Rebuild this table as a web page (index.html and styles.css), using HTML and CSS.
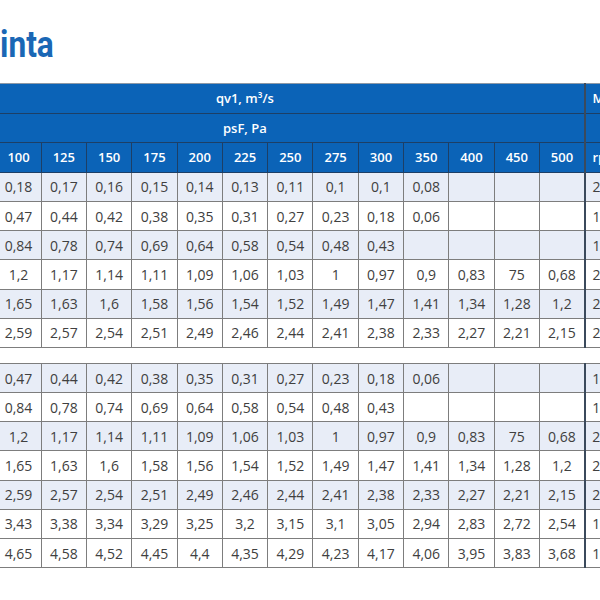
FILE: index.html
```html
<!DOCTYPE html>
<html lang="es">
<head>
<meta charset="utf-8">
<title>Tabla</title>
<link rel="stylesheet" href="styles.css">
</head>
<body>
<div class="page">
  <h1 class="title">inta</h1>

  <table class="grid">
    <colgroup>
      <col class="c"><col class="c">
      <col class="c"><col class="c"><col class="c"><col class="c"><col class="c"><col class="c"><col class="c">
      <col class="c"><col class="c"><col class="c"><col class="c"><col class="c"><col class="c">
      <col class="cm">
    </colgroup>
    <thead>
      <tr class="h1">
        <th colspan="15">qv1, m³/s</th>
        <th class="m">Motor</th>
      </tr>
      <tr class="h2">
        <th colspan="15">psF, Pa</th>
        <th class="m"></th>
      </tr>
      <tr class="h3">
        <th></th><th></th>
        <th>100</th><th>125</th><th>150</th><th>175</th><th>200</th><th>225</th><th>250</th>
        <th>275</th><th>300</th><th>350</th><th>400</th><th>450</th><th>500</th>
        <th class="m">rpm</th>
      </tr>
    </thead>
    <tbody>
      <tr class="alt"><td></td><td></td><td>0,18</td><td>0,17</td><td>0,16</td><td>0,15</td><td>0,14</td><td>0,13</td><td>0,11</td><td>0,1</td><td>0,1</td><td>0,08</td><td></td><td></td><td></td><td class="m">250</td></tr>
      <tr><td></td><td></td><td>0,47</td><td>0,44</td><td>0,42</td><td>0,38</td><td>0,35</td><td>0,31</td><td>0,27</td><td>0,23</td><td>0,18</td><td>0,06</td><td></td><td></td><td></td><td class="m">180</td></tr>
      <tr class="alt"><td></td><td></td><td>0,84</td><td>0,78</td><td>0,74</td><td>0,69</td><td>0,64</td><td>0,58</td><td>0,54</td><td>0,48</td><td>0,43</td><td></td><td></td><td></td><td></td><td class="m">140</td></tr>
      <tr><td></td><td></td><td>1,2</td><td>1,17</td><td>1,14</td><td>1,11</td><td>1,09</td><td>1,06</td><td>1,03</td><td>1</td><td>0,97</td><td>0,9</td><td>0,83</td><td>75</td><td>0,68</td><td class="m">230</td></tr>
      <tr class="alt"><td></td><td></td><td>1,65</td><td>1,63</td><td>1,6</td><td>1,58</td><td>1,56</td><td>1,54</td><td>1,52</td><td>1,49</td><td>1,47</td><td>1,41</td><td>1,34</td><td>1,28</td><td>1,2</td><td class="m">260</td></tr>
      <tr><td></td><td></td><td>2,59</td><td>2,57</td><td>2,54</td><td>2,51</td><td>2,49</td><td>2,46</td><td>2,44</td><td>2,41</td><td>2,38</td><td>2,33</td><td>2,27</td><td>2,21</td><td>2,15</td><td class="m">240</td></tr>
    </tbody>
  </table>

  <table class="grid second">
    <colgroup>
      <col class="c"><col class="c">
      <col class="c"><col class="c"><col class="c"><col class="c"><col class="c"><col class="c"><col class="c">
      <col class="c"><col class="c"><col class="c"><col class="c"><col class="c"><col class="c">
      <col class="cm">
    </colgroup>
    <tbody>
      <tr class="alt"><td></td><td></td><td>0,47</td><td>0,44</td><td>0,42</td><td>0,38</td><td>0,35</td><td>0,31</td><td>0,27</td><td>0,23</td><td>0,18</td><td>0,06</td><td></td><td></td><td></td><td class="m">190</td></tr>
      <tr><td></td><td></td><td>0,84</td><td>0,78</td><td>0,74</td><td>0,69</td><td>0,64</td><td>0,58</td><td>0,54</td><td>0,48</td><td>0,43</td><td></td><td></td><td></td><td></td><td class="m">140</td></tr>
      <tr class="alt"><td></td><td></td><td>1,2</td><td>1,17</td><td>1,14</td><td>1,11</td><td>1,09</td><td>1,06</td><td>1,03</td><td>1</td><td>0,97</td><td>0,9</td><td>0,83</td><td>75</td><td>0,68</td><td class="m">230</td></tr>
      <tr><td></td><td></td><td>1,65</td><td>1,63</td><td>1,6</td><td>1,58</td><td>1,56</td><td>1,54</td><td>1,52</td><td>1,49</td><td>1,47</td><td>1,41</td><td>1,34</td><td>1,28</td><td>1,2</td><td class="m">260</td></tr>
      <tr class="alt"><td></td><td></td><td>2,59</td><td>2,57</td><td>2,54</td><td>2,51</td><td>2,49</td><td>2,46</td><td>2,44</td><td>2,41</td><td>2,38</td><td>2,33</td><td>2,27</td><td>2,21</td><td>2,15</td><td class="m">240</td></tr>
      <tr><td></td><td></td><td>3,43</td><td>3,38</td><td>3,34</td><td>3,29</td><td>3,25</td><td>3,2</td><td>3,15</td><td>3,1</td><td>3,05</td><td>2,94</td><td>2,83</td><td>2,72</td><td>2,54</td><td class="m">190</td></tr>
      <tr><td></td><td></td><td>4,65</td><td>4,58</td><td>4,52</td><td>4,45</td><td>4,4</td><td>4,35</td><td>4,29</td><td>4,23</td><td>4,17</td><td>4,06</td><td>3,95</td><td>3,83</td><td>3,68</td><td class="m">120</td></tr>
    </tbody>
  </table>
</div>
</body>
</html>
```

FILE: styles.css
```css
html, body {
  margin: 0;
  padding: 0;
  background: #ffffff;
  overflow: hidden;
}

.page {
  width: 600px;
  height: 600px;
  overflow: hidden;
  font-family: "Open Sans", "Liberation Sans", sans-serif;
}

.title {
  margin: 27px 0 0 0;
  height: 36px;
  font-family: Roboto, "Liberation Sans", sans-serif;
  font-weight: 700;
  font-size: 36px;
  line-height: 36px;
  color: #1a67b5;
  transform: scaleX(0.88);
  transform-origin: left center;
  white-space: nowrap;
}

.grid {
  border-collapse: collapse;
  table-layout: fixed;
  width: 739.5px;
  margin: 20px 0 0 -95.2px;
}

.grid col.c {
  width: 45.3px;
}

.grid col.cm {
  width: 60px;
}

.grid th {
  background: #0b63b7;
  color: #ffffff;
  font-weight: 600;
  font-size: 13px;
  text-align: center;
  padding: 0;
  border: 1px solid #1d3f66;
  white-space: nowrap;
  overflow: hidden;
}

.grid thead tr {
  height: 29.6px;
}

.grid thead tr.h1 th {
  border-top: 1px solid #8c98a6;
}

.grid td {
  color: #404040;
  font-size: 14px;
  text-align: center;
  padding: 0;
  border: 1px solid #7d7d7d;
  background: #ffffff;
  white-space: nowrap;
  overflow: hidden;
}

.grid tbody tr {
  height: 29.2px;
}

.grid tbody tr.alt td {
  background: #e8edf7;
}

.grid .m {
  text-align: left;
  padding-left: 6.5px;
  border-left: 2px solid #3b4a5c;
}

.grid.second {
  margin-top: 15px;
}
```
